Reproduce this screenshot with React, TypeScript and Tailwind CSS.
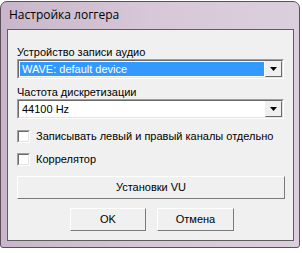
export default function App() {
  return (
    <div className="w-[302px] h-[253px] bg-white pt-[1px] font-['Liberation_Sans',Arial,sans-serif] text-[11px] text-black">
      <div className="w-[300px] h-[247px] rounded-t-[7px] rounded-b-[3px] border border-[#5a4f5b] bg-gradient-to-r from-[#c9b6ca] via-[#d7c7d8] to-[#dccfdd] flex flex-col">
        <div className="h-[27px] pl-[8px] pt-[5px] font-['Open_Sans','Noto_Sans',sans-serif] text-[12px] leading-[16px] text-black">
          Настройка логгера
        </div>
        <div className="ml-[6px] w-[287px] h-[212px] border border-[#5e5e5e] bg-[#f0f0f0] px-[9px] flex flex-col">
          <div className="mt-[15px] h-[14px] leading-[14px]">Устройство записи аудио</div>
          <Combo value="WAVE: default device" selected />
          <div className="mt-[6px] h-[14px] leading-[14px]">Частота дискретизации</div>
          <Combo value="44100 Hz" />
          <Check label="Записывать левый и правый каналы отдельно" className="mt-[11px]" />
          <Check label="Коррелятор" className="mt-[10px]" />
          <button
            type="button"
            className="mt-[10px] h-[23px] w-[268px] border border-t-white border-l-white border-b-[#7a7a7a] border-r-[#7a7a7a] bg-[#f0f0f0] text-[11px]"
          >
            Установки VU
          </button>
          <div className="mt-[9px] flex gap-[11px] pl-[53px]">
            <button
              type="button"
              className="h-[23px] w-[76px] border border-t-white border-l-white border-b-[#7a7a7a] border-r-[#7a7a7a] bg-[#f0f0f0] text-[11px]"
            >
              OK
            </button>
            <button
              type="button"
              className="h-[23px] w-[77px] border border-t-white border-l-white border-b-[#7a7a7a] border-r-[#7a7a7a] bg-[#f0f0f0] text-[11px]"
            >
              Отмена
            </button>
          </div>
        </div>
      </div>
    </div>
  );
}

function Combo({ value, selected }: { value: string; selected?: boolean }) {
  return (
    <div className="h-[20px] w-[267px] border border-t-[#a0a0a0] border-l-[#a0a0a0] border-b-white border-r-white">
      <div className="flex h-full border border-t-[#696969] border-l-[#696969] border-b-[#e3e3e3] border-r-[#e3e3e3] bg-white">
        <div className="flex-1 p-[1px]">
          <div
            className={
              selected
                ? "h-full bg-[#3399ff] pl-[2px] leading-[14px] text-white"
                : "h-full pl-[2px] leading-[14px] text-black"
            }
          >
            {value}
          </div>
        </div>
        <div className="flex w-[17px] items-center justify-center border border-t-[#f0f0f0] border-l-[#f0f0f0] border-b-[#696969] border-r-[#696969] bg-[#f0f0f0]">
          <svg width="7" height="4" viewBox="0 0 7 4">
            <path d="M0 0H7L3.5 4Z" fill="#000" />
          </svg>
        </div>
      </div>
    </div>
  );
}

function Check({ label, className }: { label: string; className?: string }) {
  return (
    <div className={"flex items-center h-[13px] " + (className ?? "")}>
      <div className="h-[13px] w-[13px] border border-t-[#a0a0a0] border-l-[#a0a0a0] border-b-white border-r-white">
        <div className="h-full w-full border border-t-[#696969] border-l-[#696969] border-b-[#e3e3e3] border-r-[#e3e3e3] bg-white" />
      </div>
      <span className="ml-[6px] leading-[13px]">{label}</span>
    </div>
  );
}
